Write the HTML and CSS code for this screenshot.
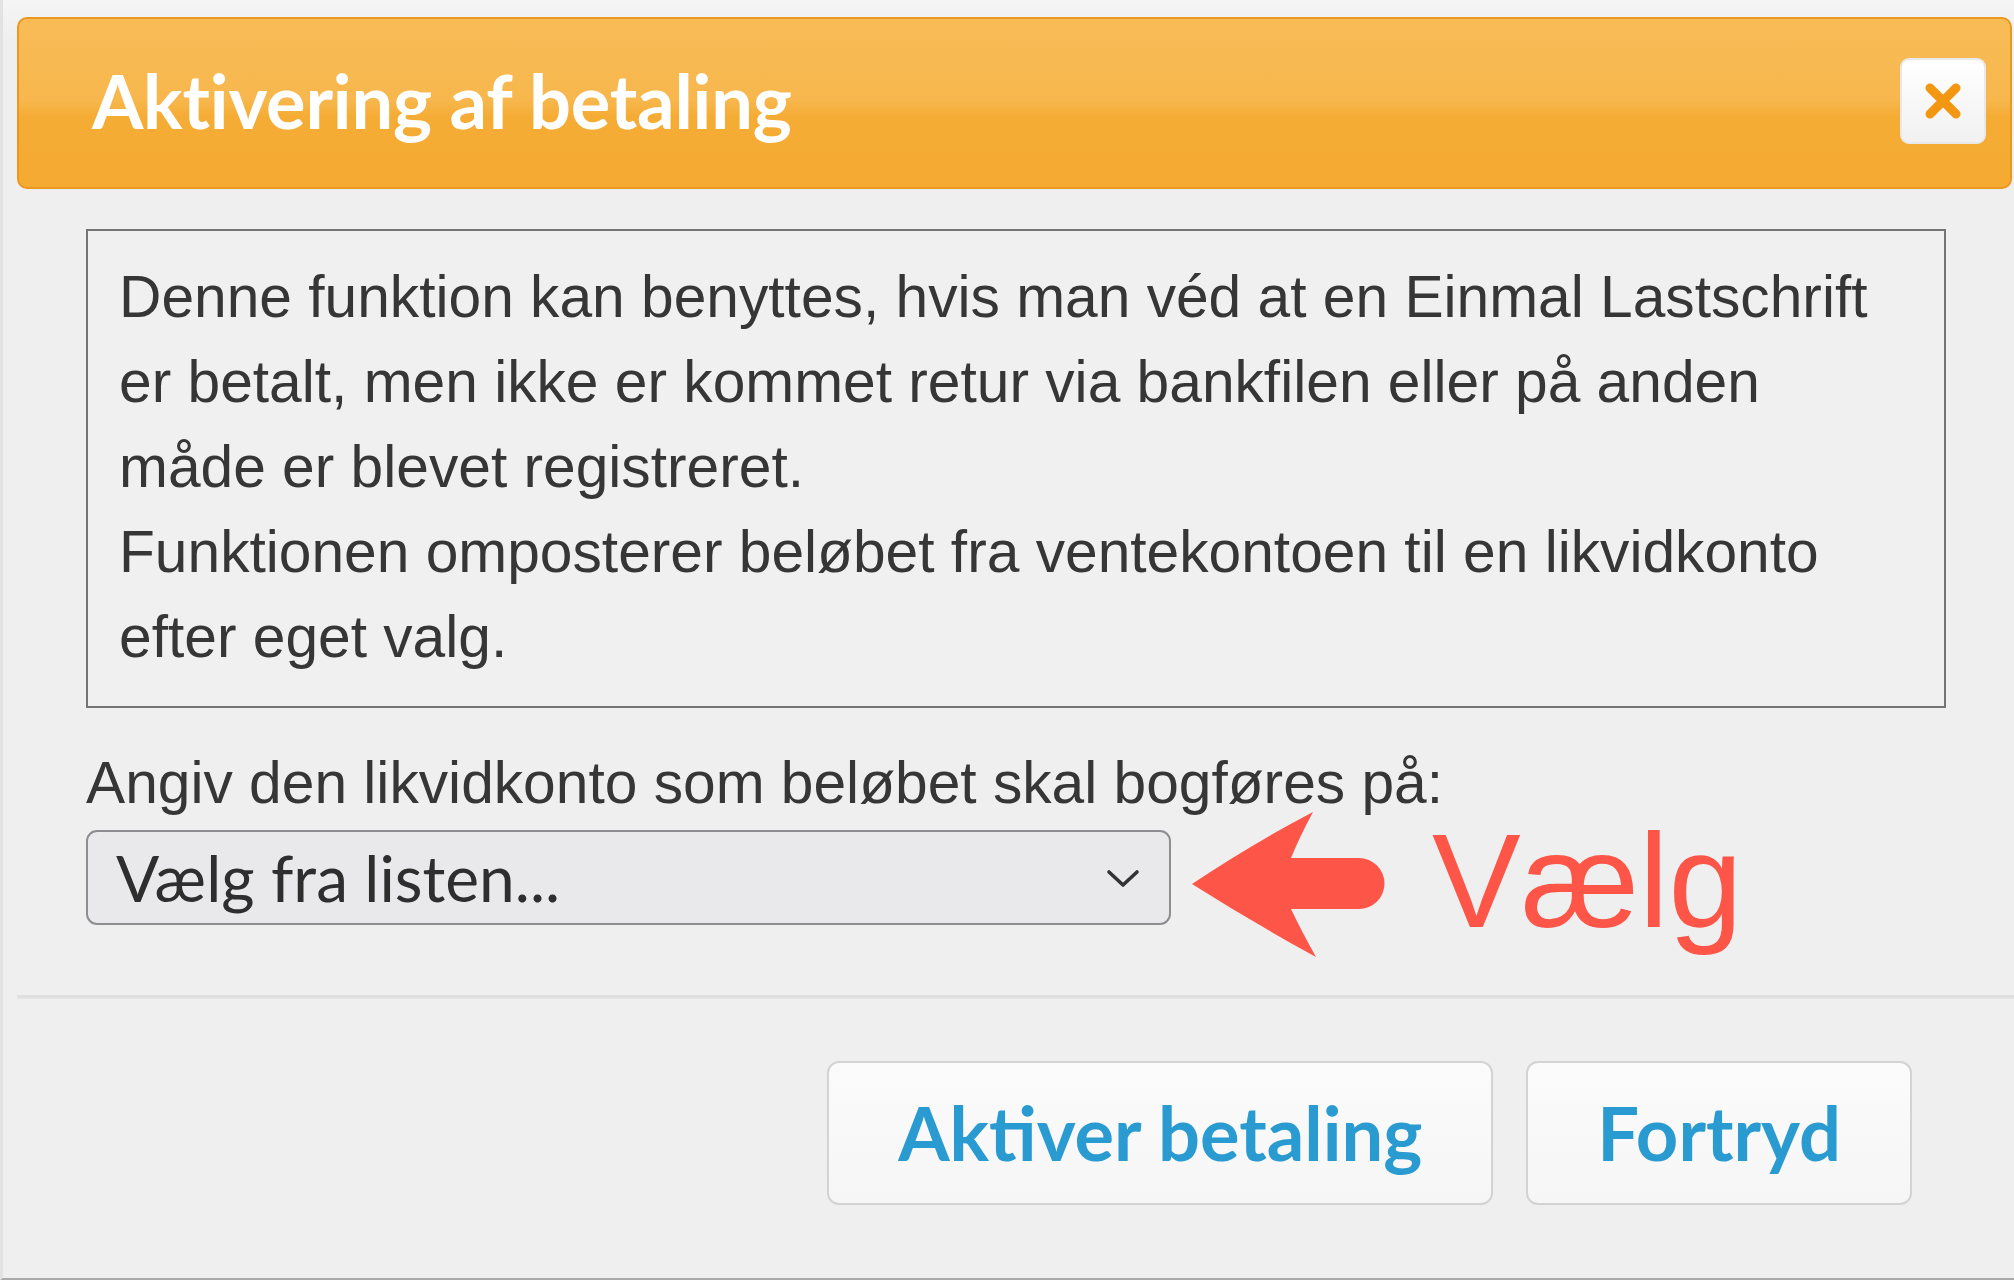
FILE: index.html
```html
<!DOCTYPE html>
<html lang="da">
<head>
<meta charset="utf-8">
<title>Aktivering af betaling</title>
<link rel="stylesheet" href="styles.css">
</head>
<body>
<div class="dialog">
  <div class="header">
    <h1 class="title">Aktivering af betaling</h1>
    <button class="close" type="button" aria-label="Luk">
      <svg class="close-icon" viewBox="0 0 40 40" width="40" height="40">
        <path d="M7 7 L33 33 M33 7 L7 33" stroke="#f39712" stroke-width="9" stroke-linecap="round" fill="none"/>
      </svg>
    </button>
  </div>

  <div class="content">
    <div class="info">
      Denne funktion kan benyttes, hvis man véd at en Einmal Lastschrift er betalt, men ikke er kommet retur via bankfilen eller på anden måde er blevet registreret.<br>
      Funktionen omposterer beløbet fra ventekontoen til en likvidkonto efter eget valg.
    </div>

    <label class="label">Angiv den likvidkonto som beløbet skal bogføres på:</label>
    <div class="select-row">
      <div class="select">
        <span class="select-text">Vælg fra listen...</span>
        <svg class="chevron" viewBox="0 0 36 22" width="36" height="22">
          <path d="M4 5 L18 18 L32 5" stroke="#333" stroke-width="3.6" fill="none" stroke-linecap="round" stroke-linejoin="round"/>
        </svg>
      </div>
      <svg class="arrow" viewBox="0 0 200 152" width="200" height="152">
        <path d="M2 76 Q62 36 123 4 Q110 28 101 50 L169 50 A25.5 25.5 0 0 1 169 101 L101 101 Q112 124 126 149 Q62 114 2 76 Z" fill="#fd5548"/>
      </svg>
      <span class="annot">Vælg</span>
    </div>
  </div>

  <div class="footer">
    <button class="btn" type="button">Aktiver betaling</button>
    <button class="btn" type="button">Fortryd</button>
  </div>
</div>
</body>
</html>
```

FILE: styles.css
```css
* { box-sizing: border-box; }

html, body {
  margin: 0;
  padding: 0;
  background: #efefef;
}

.dialog {
  width: 2014px;
  height: 1280px;
  background: linear-gradient(#f5f5f5 0, #efefef 40px, #efefef 100%);
  border-left: 3px solid #e3e3e3;
  border-bottom: 2px solid #a9a9a9;
  padding-top: 17px;
  overflow: hidden;
  font-family: "Liberation Sans", Arial, sans-serif;
  color: #363636;
}

.header {
  margin-left: 14px;
  margin-right: 2px;
  height: 172px;
  border: 2px solid #ea9820;
  border-radius: 10px;
  background: linear-gradient(#f8bc57 0%, #f7b74d 48%, #f5ac35 58%, #f5ab32 100%);
  display: flex;
  align-items: center;
  justify-content: space-between;
  padding: 0 24px 4px 73px;
}

.title {
  margin: 0;
  font-family: Lato, "Open Sans", sans-serif;
  font-weight: 700;
  font-size: 74px;
  color: #ffffff;
  line-height: 1;
  letter-spacing: -0.2px;
}

.close {
  width: 86px;
  height: 86px;
  border: 2px solid #e9e9e9;
  border-radius: 9px;
  background: linear-gradient(#ffffff, #f1f1f1);
  display: flex;
  align-items: center;
  justify-content: center;
  padding: 0;
}

.content {
  padding: 40px 0 0 83px;
}

.info {
  width: 1860px;
  height: 479px;
  border: 2px solid #747474;
  background: #f0f0f0;
  padding: 23px 54px 0 31px;
  font-size: 58.7px;
  line-height: 85px;
  color: #363636;
}

.label {
  display: block;
  margin-top: 40px;
  font-size: 58.7px;
  line-height: 70px;
  color: #363636;
}

.select-row {
  margin-top: 12px;
  display: flex;
  align-items: center;
}

.select {
  width: 1085px;
  height: 95px;
  border: 2px solid #8e8e92;
  border-radius: 11px;
  background: #e9e9eb;
  display: flex;
  align-items: center;
  justify-content: space-between;
  padding: 0 28px 0 28px;
}

.select-text {
  font-family: Lato, "Open Sans", sans-serif;
  font-size: 64px;
  color: #2e2e2e;
  line-height: 1;
}

.chevron {
  display: block;
}

.arrow {
  display: block;
  margin: -30px 0 -30px 19px;
  position: relative;
  top: 6px;
}

.annot {
  margin-left: 42px;
  font-size: 133px;
  line-height: 95px;
  color: #fd5548;
  position: relative;
  top: 4px;
}

.footer {
  margin-top: 70px;
  margin-left: 14px;
  border-top: 3px solid #e0e0e0;
  box-shadow: inset 0 1px 0 #e6e6e6;
  padding: 63px 102px 0 0;
  display: flex;
  justify-content: flex-end;
  gap: 33px;
}

.btn {
  height: 144px;
  padding: 0 69px;
  border: 2px solid #d3d3d3;
  border-radius: 12px;
  background: linear-gradient(#fbfbfb, #f6f6f6);
  font-family: Lato, "Open Sans", sans-serif;
  font-weight: 700;
  font-size: 74px;
  color: #2a9bd0;
  line-height: 1;
}
```
